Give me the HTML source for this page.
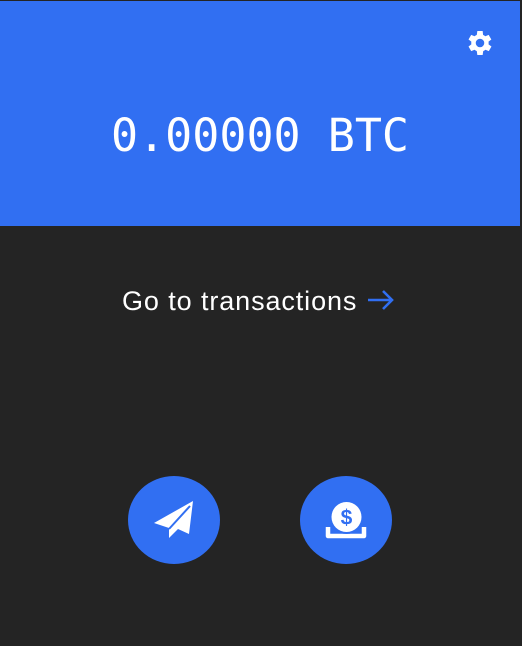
<!DOCTYPE html>
<html><head><meta charset="utf-8"><style>
html,body{margin:0;padding:0;width:522px;height:646px;overflow:hidden;background:#242424;font-family:"Liberation Sans",sans-serif;}
.top{position:absolute;left:0;top:1px;width:520px;height:225px;background:#316ff2;}
.bal{position:absolute;left:0;width:520px;top:108px;text-align:center;font-family:"DejaVu Sans Mono","Liberation Mono",monospace;font-size:45px;color:#fff;line-height:56px;}
.go{position:absolute;left:122px;top:283px;font-size:27px;letter-spacing:0.9px;color:#fff;line-height:36px;white-space:nowrap;}
.btn{position:absolute;top:476px;width:92px;height:88px;border-radius:50%;background:#316ff2;}
</style></head><body>
<div class="top"></div>
<svg style="position:absolute;left:464px;top:27px" width="32" height="32" viewBox="0 0 24 24"><path fill="#fff" d="M19.4 13a7.5 7.5 0 0 0 0-2l2.1-1.6-2-3.5-2.5 1a7.6 7.6 0 0 0-1.7-1L15 3h-4l-.4 2.9a7.6 7.6 0 0 0-1.7 1l-2.5-1-2 3.5L6.5 11a7.5 7.5 0 0 0 0 2l-2.1 1.6 2 3.5 2.5-1a7.6 7.6 0 0 0 1.7 1L11 21h4l.4-2.9a7.6 7.6 0 0 0 1.7-1l2.5 1 2-3.5zM13 15.2a3.2 3.2 0 1 1 0-6.4 3.2 3.2 0 0 1 0 6.4z" transform="translate(-1 0)"/></svg>
<div class="bal">0.00000 BTC</div>
<div class="go">Go to transactions<svg width="30" height="24" viewBox="0 0 30 24" style="vertical-align:-2px;margin-left:9px"><path d="M2 12h24M17 3l9 9-9 9" stroke="#316ff2" stroke-width="2.6" fill="none"/></svg></div>
<div class="btn" style="left:128px"><svg width="92" height="88" viewBox="0 0 92 88"><path fill="#fff" d="M26 47 L65 25 L61 58 L50 53 L41 62 L41 52 Z"/><path d="M41 53 L62 30" stroke="#316ff2" stroke-width="2"/></svg></div>
<div class="btn" style="left:300px"><svg width="92" height="88" viewBox="0 0 92 88"><path d="M28 51v9h36v-9" stroke="#fff" stroke-width="4.5" fill="none" stroke-linejoin="round"/><circle cx="46.5" cy="41" r="17" fill="#316ff2"/><circle cx="46.5" cy="41" r="15" fill="#fff"/><text x="46.5" y="48.5" text-anchor="middle" font-family="Liberation Sans" font-weight="bold" font-size="21" fill="#316ff2">$</text></svg></div>
</body></html>
